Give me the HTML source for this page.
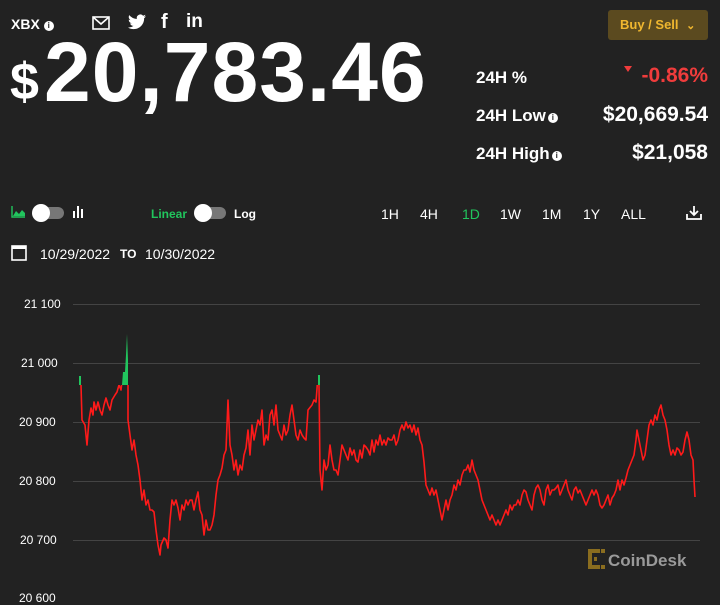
<!DOCTYPE html>
<html><head><meta charset="utf-8"><style>
*{margin:0;padding:0;box-sizing:border-box}
body{width:720px;height:597px;background:#222;color:#fff;font-family:"Liberation Sans",sans-serif;position:relative;overflow:hidden}
.a{position:absolute;white-space:nowrap}
.b{font-weight:bold}
.info{display:inline-block;width:10px;height:10px;border-radius:50%;background:#fff;color:#222;font-size:8px;text-align:center;line-height:10px;font-weight:bold;vertical-align:1px}
.tf{font-size:14px;color:#fff;top:206px}
</style></head><body>
<div class="a b" style="left:11px;top:16px;font-size:14px">XBX <span class="info">i</span></div>
<svg class="a" style="left:92px;top:16px" width="18" height="14" viewBox="0 0 18 14"><rect x="1" y="1" width="16" height="12" fill="none" stroke="#fff" stroke-width="1.6"/><path d="M1 1l8 7 8-7" fill="none" stroke="#fff" stroke-width="1.6"/></svg>
<svg class="a" style="left:128px;top:14px" width="18" height="16" viewBox="0 0 24 20"><path fill="#fff" d="M24 2.4a10 10 0 0 1-2.8.8A5 5 0 0 0 23.3.4a10 10 0 0 1-3.1 1.2A4.9 4.9 0 0 0 11.8 6 14 14 0 0 1 1.7.9a4.9 4.9 0 0 0 1.5 6.6A4.9 4.9 0 0 1 1 6.9a4.9 4.9 0 0 0 3.9 4.8 5 5 0 0 1-2.2.1 4.9 4.9 0 0 0 4.6 3.4A9.9 9.9 0 0 1 0 17.3 14 14 0 0 0 7.5 19.5c9 0 14-7.5 14-14v-.6A10 10 0 0 0 24 2.4z"/></svg>
<div class="a b" style="left:161px;top:11px;font-size:20px">f</div>
<div class="a b" style="left:186px;top:11px;font-size:19px">in</div>
<div class="a b" style="left:10px;top:56px;font-size:52px;line-height:52px">$</div>
<div class="a b" style="left:44px;top:30px;font-size:84px;letter-spacing:1px;line-height:84px">20,783.46</div>
<div class="a b" style="left:608px;top:10px;width:100px;height:30px;background:#5b4a1f;border-radius:3px;color:#f0b72f;font-size:13px;line-height:30px;padding-left:12px">Buy / Sell <span style="font-size:11px;margin-left:4px">&#8964;</span></div>
<div class="a b" style="left:476px;top:68px;font-size:17px">24H %</div>
<div class="a b" style="left:476px;top:106px;font-size:17px">24H Low<span class="info" style="margin-left:2px">i</span></div>
<div class="a b" style="left:476px;top:144px;font-size:17px">24H High<span class="info" style="margin-left:2px">i</span></div>
<div class="a" style="left:624px;top:66px;width:0;height:0;border-left:4px solid transparent;border-right:4px solid transparent;border-top:6px solid #f03c3c"></div>
<div class="a b" style="right:12px;top:64px;font-size:21px;color:#f03c3c">-0.86%</div>
<div class="a b" style="right:12px;top:103px;font-size:21px">$20,669.54</div>
<div class="a b" style="right:12px;top:141px;font-size:21px">$21,058</div>
<svg class="a" style="left:11px;top:206px" width="14" height="12"><path d="M1 0v11h13" fill="none" stroke="#21c55d" stroke-width="1.4"/><path d="M2 10l3-5 3 3 3-4 3 3v3z" fill="#21c55d"/></svg>
<div class="a" style="left:33px;top:207px;width:31px;height:12px;border-radius:6px;background:#777"></div>
<div class="a" style="left:32px;top:204px;width:18px;height:18px;border-radius:50%;background:#fff"></div>
<svg class="a" style="left:73px;top:206px" width="12" height="12"><rect x="0" y="5" width="2" height="7" fill="#fff"/><rect x="4" y="0" width="2" height="12" fill="#fff"/><rect x="8" y="3" width="2" height="9" fill="#fff"/></svg>
<div class="a b" style="left:151px;top:207px;font-size:12px;color:#21c55d">Linear</div>
<div class="a" style="left:195px;top:207px;width:31px;height:12px;border-radius:6px;background:#777"></div>
<div class="a" style="left:194px;top:204px;width:18px;height:18px;border-radius:50%;background:#fff"></div>
<div class="a b" style="left:234px;top:207px;font-size:12px">Log</div>
<div class="a tf" style="left:381px">1H</div>
<div class="a tf" style="left:420px">4H</div>
<div class="a tf" style="left:462px;color:#21c55d">1D</div>
<div class="a tf" style="left:500px">1W</div>
<div class="a tf" style="left:542px">1M</div>
<div class="a tf" style="left:583px">1Y</div>
<div class="a tf" style="left:621px">ALL</div>
<svg class="a" style="left:686px;top:205px" width="16" height="16"><path d="M8 1v9M4 6l4 4 4-4" fill="none" stroke="#fff" stroke-width="1.8"/><path d="M1 9v5h14V9" fill="none" stroke="#fff" stroke-width="1.8"/></svg>
<svg class="a" style="left:11px;top:244px" width="16" height="18"><rect x="1" y="2" width="14" height="14" fill="none" stroke="#fff" stroke-width="1.6"/><rect x="1" y="2" width="14" height="3" fill="#fff"/></svg>
<div class="a" style="left:40px;top:246px;font-size:14px">10/29/2022</div>
<div class="a b" style="left:120px;top:247px;font-size:12px">TO</div>
<div class="a" style="left:145px;top:246px;font-size:14px;width:73px;overflow:hidden">10/30/2022</div>
<div class="a" style="left:24px;top:297px;font-size:12px">21 100</div>
<div class="a" style="left:21px;top:356px;font-size:12px">21 000</div>
<div class="a" style="left:19px;top:415px;font-size:12px">20 900</div>
<div class="a" style="left:19px;top:474px;font-size:12px">20 800</div>
<div class="a" style="left:20px;top:533px;font-size:12px">20 700</div>
<div class="a" style="left:19px;top:591px;font-size:12px">20 600</div>
<svg class="a" style="left:0;top:0" width="720" height="597">
<defs><clipPath id="top"><rect x="0" y="0" width="720" height="385"/></clipPath><clipPath id="bot"><rect x="0" y="385" width="720" height="220"/></clipPath></defs>
<g stroke="#444" stroke-width="1"><line x1="73" y1="304.5" x2="700" y2="304.5"/><line x1="73" y1="363.5" x2="700" y2="363.5"/><line x1="73" y1="422.5" x2="700" y2="422.5"/><line x1="73" y1="481.5" x2="700" y2="481.5"/><line x1="73" y1="540.5" x2="700" y2="540.5"/></g>
<polygon points="122,385 123,372 125,372 126,355 127,334 128,360 128,385" fill="#21c55d"/>
<rect x="79" y="376" width="2" height="9" fill="#21c55d"/>
<rect x="318" y="375" width="2" height="10" fill="#21c55d"/>
<g id="ln" fill="none" stroke-width="1.6" stroke-linejoin="round">
<polyline id="p" clip-path="url(#bot)" stroke="#ff1a1a" points="80,377 81,385 82,420 85,425 87,445 89,420 91,408 93,415 94,402 96,410 98,402 100,410 102,415 104,405 106,398 108,405 110,410 112,400 115,395 117,392 119,385 121,390 123,372 125,372 126,355 127,334 128,385 128,420 130,435 132,450 134,440 136,455 138,465 140,480 142,500 144,490 146,505 148,500 150,510 152,510 154,512 156,530 158,545 160,555 161,545 164,538 166,540 168,548 170,520 172,500 174,505 176,500 178,508 180,520 182,505 184,510 186,500 188,505 190,500 192,500 194,510 196,500 198,492 200,510 202,515 204,535 206,520 208,530 210,530 212,525 214,515 216,495 218,480 220,475 222,468 224,455 226,450 228,400 230,445 232,455 234,470 236,460 238,475 240,465 242,470 244,455 246,448 248,430 250,455 252,425 254,440 256,430 258,420 260,425 262,410 264,445 266,435 268,440 270,415 272,410 274,425 276,405 278,430 280,435 282,440 284,425 286,435 288,430 290,415 292,405 294,420 296,435 298,440 300,430 302,435 304,438 306,440 308,410 312,405 314,400 316,402 318,375 319,385 320,470 322,490 324,460 326,470 328,465 330,445 332,460 334,470 336,470 338,475 340,460 342,445 344,450 346,455 348,460 350,448 352,455 354,450 356,460 358,462 360,450 362,458 364,445 366,447 368,450 370,455 372,440 374,452 376,440 378,445 380,435 382,445 384,440 386,445 388,438 390,440 392,440 394,435 396,445 398,440 400,430 402,425 404,430 406,422 408,428 410,425 412,432 414,425 416,435 418,428 420,440 422,445 424,462 426,485 428,490 430,495 432,488 434,495 436,490 438,500 440,510 442,520 444,510 446,500 448,510 450,500 452,495 454,485 456,490 458,480 460,485 462,475 464,470 466,470 468,465 470,472 472,460 474,470 476,475 478,480 480,490 482,500 484,505 486,510 488,515 490,520 492,515 494,520 496,525 498,520 500,525 502,520 504,515 506,510 508,515 510,505 512,510 514,505 516,505 518,500 520,505 522,495 524,490 526,492 528,500 530,505 532,510 534,495 536,488 538,485 540,490 542,500 544,505 546,490 548,485 550,495 552,490 554,490 556,488 558,485 560,495 562,490 564,485 566,480 568,490 570,495 572,500 574,490 576,487 578,493 580,490 582,495 584,500 586,505 588,500 590,495 592,490 594,495 596,490 598,495 600,505 602,508 604,505 606,500 608,495 610,505 612,498 614,495 616,490 618,480 620,490 622,480 624,485 626,478 628,470 630,465 632,460 634,455 636,440 637,430 639,440 641,450 643,460 645,455 647,440 649,425 651,420 653,425 655,415 657,420 659,410 661,405 663,415 665,420 667,430 669,445 671,455 673,450 675,455 677,448 679,450 681,455 683,452 685,440 687,432 689,440 691,455 693,460 694,480 695,497"/>
</g>
<g fill="#8a6d1f"><rect x="588" y="549" width="4" height="20"/><rect x="588" y="549" width="12" height="4"/><rect x="588" y="565" width="12" height="4"/><rect x="601" y="549" width="4" height="4"/><rect x="601" y="565" width="4" height="4"/><rect x="594" y="557" width="3" height="4"/></g>
<text x="608" y="566" font-family="Liberation Sans" font-weight="bold" font-size="17" fill="#9a9a9a">CoinDesk</text>
</svg>
</body></html>
